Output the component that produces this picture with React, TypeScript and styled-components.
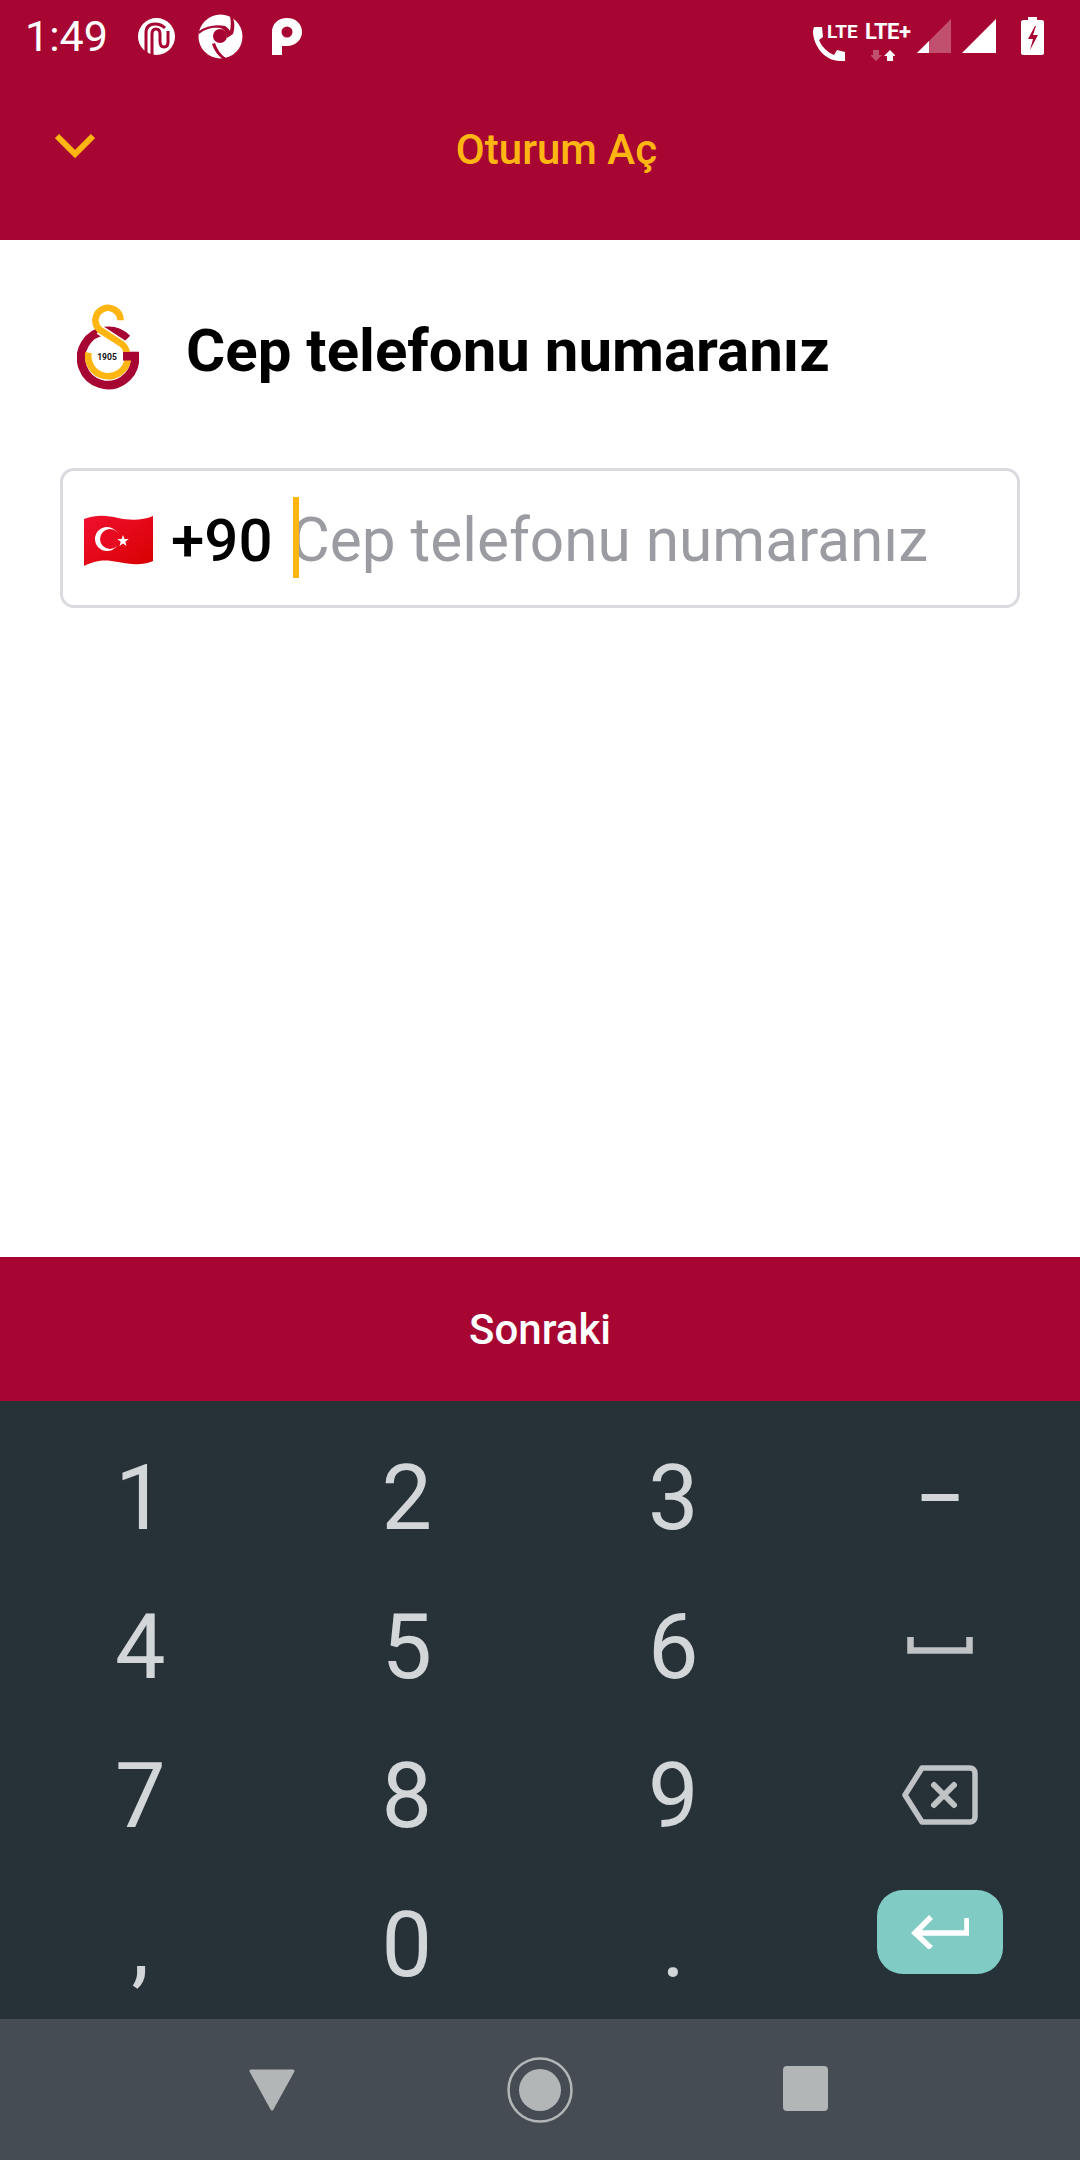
import React from "react";
import styled, { createGlobalStyle } from "styled-components";

const GlobalStyle = createGlobalStyle`
  html, body {
    margin: 0;
    padding: 0;
    background: #fff;
    font-family: Roboto, "Liberation Sans", sans-serif;
  }
`;

const Screen = styled.div`
  width: 1080px;
  height: 2160px;
  display: flex;
  flex-direction: column;
  overflow: hidden;
`;

const Top = styled.header`
  height: 240px;
  flex: none;
  background: #a70532;
  display: flex;
  flex-direction: column;
`;

const StatusBar = styled.div`
  height: 72px;
  display: flex;
  align-items: center;
  justify-content: space-between;
  padding: 0 36px 0 25px;
`;

const StatusGroup = styled.div`
  display: flex;
  align-items: center;
`;

const Time = styled.span`
  font-size: 43px;
  color: #fff;
  margin-right: 30px;
  line-height: 72px;
`;

const AppBar = styled.div`
  position: relative;
  flex: 1;
  display: flex;
  align-items: center;
  justify-content: center;
  padding: 0 0 14px 33px;
`;

const BackIcon = styled.svg`
  position: absolute;
  left: 55px;
  top: 61px;
`;

const AppTitle = styled.h1`
  margin: 0;
  font-size: 42px;
  font-weight: 500;
  color: #ffb612;
`;

const Content = styled.main`
  flex: 1;
  background: #fff;
  padding: 60px 60px 0;
`;

const Heading = styled.div`
  display: flex;
  align-items: center;
  gap: 47px;
  padding-left: 17px;
  height: 100px;
`;

const HeadingLogo = styled.svg`
  margin-bottom: 4px;
`;

const HeadingText = styled.h2`
  margin: 0;
  font-size: 60px;
  font-weight: 700;
  color: #000;
`;

const Field = styled.div`
  margin-top: 68px;
  height: 140px;
  box-sizing: border-box;
  border: 3px solid #d9dbdf;
  border-radius: 14px;
  display: flex;
  align-items: center;
  padding: 5px 0 0 21px;
`;

const Prefix = styled.span`
  font-size: 60px;
  font-weight: 500;
  color: #000;
  margin-left: 18px;
  margin-right: 20px;
`;

const InputArea = styled.div`
  position: relative;
  font-size: 60.3px;
  color: #9b9ca1;
  text-indent: -2px;
`;

const Caret = styled.span`
  position: absolute;
  left: 0;
  top: -8px;
  width: 6px;
  height: 81px;
  background: #ffb612;
`;

const NextButton = styled.button`
  flex: none;
  height: 144px;
  border: 0;
  background: #a70532;
  color: #fff;
  font-family: inherit;
  font-size: 42px;
  font-weight: 500;
`;

const Keyboard = styled.section`
  flex: none;
  height: 618px;
  box-sizing: border-box;
  background: #273238;
  padding: 21px 7px 0;
  display: grid;
  grid-template-columns: repeat(4, 1fr);
  grid-auto-rows: 149px;
`;

const Key = styled.div`
  display: flex;
  align-items: center;
  justify-content: center;
  padding-top: 3px;
  color: #d3d6d8;
  font-size: 90px;
`;

const DashKey = styled(Key)`
  font-size: 74px;
  font-weight: 500;
`;

const IconKey = styled(Key)`
  padding-top: 0;
`;

const EnterKey = styled.div`
  width: 126px;
  height: 84px;
  margin-bottom: 24px;
  border-radius: 26px;
  background: #80cbc4;
  display: flex;
  align-items: center;
  justify-content: center;
`;

const NavBar = styled.nav`
  flex: none;
  height: 141px;
  background: #454c53;
  display: flex;
  align-items: center;
  justify-content: space-between;
  padding: 0 252px 0 248px;
`;

const RecentButton = styled.div`
  width: 45px;
  height: 45px;
  margin-bottom: 3px;
  border-radius: 4px;
  background: #b2b6b7;
`;

const LteSmall = styled.span`
  font-size: 19px;
  font-weight: 700;
  color: #fff;
  position: absolute;
  left: 15px;
  top: 14px;
  line-height: 20px;
`;

const LtePlus = styled.span`
  font-size: 22px;
  font-weight: 700;
  letter-spacing: -0.5px;
  color: #fff;
  position: absolute;
  left: 53px;
  top: 12px;
  line-height: 24px;
`;

const CallCluster = styled.div`
  position: relative;
  width: 105px;
  height: 56px;
`;

const PhoneIcon = styled.svg`
  position: absolute;
  left: 0;
  top: 18px;
`;

const ArrowIcon = styled.svg`
  position: absolute;
  left: 59px;
  top: 42px;
`;

const SignalIcon = styled.svg<{ $gap: number }>`
  margin-left: ${(p) => p.$gap}px;
`;

const LogoWhite = styled.svg<{ $gap: number }>`
  margin-right: ${(p) => p.$gap}px;
`;

function StatusLeft() {
  return (
    <StatusGroup>
      <Time>1:49</Time>
      <LogoWhite $gap={23} width="37" height="37" viewBox="0 0 37 37">
        <circle cx="18.500" cy="18.500" r="18.500" fill="#fff" />
        <path d="M8 36V15Q8 6 17 6Q23 6 27 10" fill="none" stroke="#a70532" strokeWidth="3" />
        <path d="M14 37V16Q14 11 18 11Q22 11 22 16V23Q22 29 26 29Q30 29 30 24V13" fill="none" stroke="#a70532" strokeWidth="3" />
      </LogoWhite>
      <LogoWhite $gap={29} width="45" height="45" viewBox="0 0 45 45">
        <circle cx="22.500" cy="22.500" r="22" fill="#fff" />
        <path d="M34 2c3 6 3 12 1 18l-6 4c0-5-3-9-7-10-6-1-14 0-21 6l0-3C8 12 18 10 27 12c2 1 4 3 5 5 1-5 1-10 0-15z" fill="#a70532" />
        <circle cx="22" cy="22" r="7" fill="#a70532" />
        <path d="M17 29c2 6 6 12 11 15l-3 1c-5-3-9-9-11-15z" fill="#a70532" />
      </LogoWhite>
      <svg width="30" height="37" viewBox="0 0 30 37">
        <path d="M0 14C0 6 6 0 15 0s15 6 15 14-7 14-15 14h-5v9H0z" fill="#fff" />
        <circle cx="15" cy="14" r="5.500" fill="#a70532" />
      </svg>
    </StatusGroup>
  );
}

function StatusRight() {
  return (
    <StatusGroup>
      <CallCluster>
        <PhoneIcon width="34" height="36" viewBox="0 0 34 36">
          <path d="M2 1h8l1 10-4 3c3 7 8 12 15 15l3-5 8 2v9h-5C13 35 1 20 1 5z" fill="#fff" />
        </PhoneIcon>
        <LteSmall>LTE</LteSmall>
        <LtePlus>LTE+</LtePlus>
        <ArrowIcon width="24" height="11" viewBox="0 0 24 11">
          <path d="M2 0h6v5h3l-6 6-6-6h3z" fill="#fff" opacity="0.3" />
          <path d="M16 11h6V6h3l-6-6-6 6h3z" fill="#fff" />
        </ArrowIcon>
      </CallCluster>
      <SignalIcon $gap={0} width="34" height="34" viewBox="0 0 34 34">
        <path d="M34 0v34H0z" fill="#fff" opacity="0.3" />
        <path d="M12 22v12H0z" fill="#fff" />
      </SignalIcon>
      <SignalIcon $gap={11} width="34" height="34" viewBox="0 0 34 34">
        <path d="M34 0v34H0z" fill="#fff" />
      </SignalIcon>
      <SignalIcon $gap={25} width="23" height="38" viewBox="0 0 23 38">
        <path d="M7 0h9v3h5c1 0 2 1 2 2v31c0 1-1 2-2 2H2c-1 0-2-1-2-2V5c0-1 1-2 2-2h5z" fill="#fff" />
        <path d="M14 9l-7 13h5l-3 11 8-15h-5l3-9z" fill="#a70532" />
      </SignalIcon>
    </StatusGroup>
  );
}

function ClubLogo() {
  return (
    <HeadingLogo width="62" height="88" viewBox="110 72 188 264">
      <path d="M262 176A82 82 0 1 0 286 240V228H250" fill="none" stroke="#a70532" strokeWidth="26" />
      <path d="M178 148L250 195" fill="none" stroke="#fff" strokeWidth="30" />
      <path
        d="M242 120A38 38 0 1 0 178 148L246 192C258 202 264 220 264 240A60 60 0 1 1 145 218"
        fill="none"
        stroke="#ffb612"
        strokeWidth="20"
      />
      <rect x="160" y="212" width="88" height="34" fill="#fff" />
      <path d="M250 216H298V242H250z" fill="#a70532" />
      <text x="201" y="239" fontSize="26" fontWeight="700" textAnchor="middle" fill="#111" fontFamily="Roboto">1905</text>
    </HeadingLogo>
  );
}

function TurkishFlag() {
  return (
    <svg width="69" height="52" viewBox="0 0 69 52">
      <defs>
        <linearGradient id="flagRed" x1="0" y1="0" x2="1" y2="1">
          <stop offset="0" stopColor="#f01030" />
          <stop offset="1" stopColor="#d80000" />
        </linearGradient>
      </defs>
      <path d="M0 4c14-5 24-3 34-1s24 3 35-2v45c-11 5-24 3-35 1S14 44 0 51z" fill="url(#flagRed)" />
      <circle cx="23" cy="24" r="12" fill="#fff" />
      <circle cx="26" cy="24" r="10" fill="#e80a20" />
      <path d="M39 20l1.400 4 4.300 .1-3.400 2.700 1.200 4.100-3.500-2.400-3.500 2.400 1.200-4.100-3.400-2.700 4.300-.1z" fill="#fff" />
    </svg>
  );
}

export default function App() {
  return (
    <Screen>
      <GlobalStyle />
      <Top>
        <StatusBar>
          <StatusLeft />
          <StatusRight />
        </StatusBar>
        <AppBar>
          <BackIcon width="40" height="26" viewBox="0 0 40 26">
            <path d="M2 3l18 18L38 3" fill="none" stroke="#ffb612" strokeWidth="6" />
          </BackIcon>
          <AppTitle>Oturum Aç</AppTitle>
        </AppBar>
      </Top>
      <Content>
        <Heading>
          <ClubLogo />
          <HeadingText>Cep telefonu numaranız</HeadingText>
        </Heading>
        <Field>
          <TurkishFlag />
          <Prefix>+90</Prefix>
          <InputArea>
            <Caret />
            Cep telefonu numaranız
          </InputArea>
        </Field>
      </Content>
      <NextButton>Sonraki</NextButton>
      <Keyboard>
        <Key>1</Key>
        <Key>2</Key>
        <Key>3</Key>
        <DashKey>–</DashKey>
        <Key>4</Key>
        <Key>5</Key>
        <Key>6</Key>
        <IconKey>
          <svg width="66" height="17" viewBox="0 0 66 17">
            <path d="M3.500 0v13.500h59V0" fill="none" stroke="#bfc3c6" strokeWidth="6.500" />
          </svg>
        </IconKey>
        <Key>7</Key>
        <Key>8</Key>
        <Key>9</Key>
        <IconKey>
          <svg width="76" height="60" viewBox="0 0 76 60">
            <path d="M20 3h48a5 5 0 0 1 5 5v44a5 5 0 0 1-5 5H20L3 30z" fill="none" stroke="#bfc3c6" strokeWidth="5.500" strokeLinejoin="round" />
            <path d="M32 20l20 20M52 20L32 40" stroke="#bfc3c6" strokeWidth="6" strokeLinecap="round" />
          </svg>
        </IconKey>
        <Key>,</Key>
        <Key>0</Key>
        <Key>.</Key>
        <IconKey>
          <EnterKey>
            <svg width="58" height="34" viewBox="0 0 58 34">
              <path d="M56 3v15H4M20 2L4 18l16 15" fill="none" stroke="#fff" strokeWidth="5.500" />
            </svg>
          </EnterKey>
        </IconKey>
      </Keyboard>
      <NavBar>
        <svg width="48" height="42" viewBox="0 0 48 42">
          <path d="M3 2h42L24 40z" fill="#b2b6b7" stroke="#b2b6b7" strokeWidth="3" strokeLinejoin="round" />
        </svg>
        <svg width="66" height="66" viewBox="0 0 66 66">
          <circle cx="33" cy="33" r="31.500" fill="none" stroke="#b2b6b7" strokeWidth="2.500" />
          <circle cx="33" cy="33" r="21" fill="#b2b6b7" />
        </svg>
        <RecentButton />
      </NavBar>
    </Screen>
  );
}
